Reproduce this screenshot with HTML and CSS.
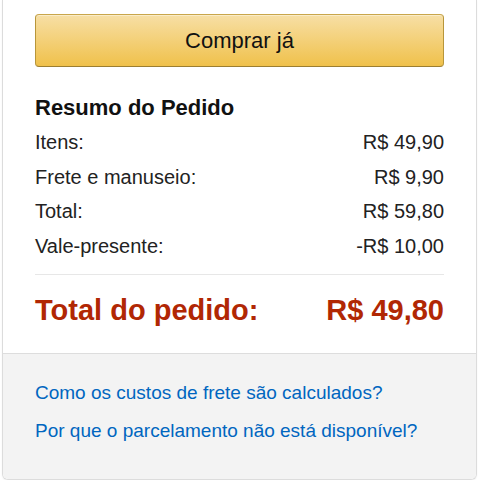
FILE: index.html
```html
<!DOCTYPE html>
<html lang="pt-BR">
<head>
<meta charset="utf-8">
<title>Resumo do Pedido</title>
<link rel="stylesheet" href="styles.css">
</head>
<body>
<div class="card">
  <div class="main">
    <button class="buy">Comprar já</button>
    <h2 class="title">Resumo do Pedido</h2>
    <div class="rows">
      <div class="row"><span>Itens:</span><span>R$ 49,90</span></div>
      <div class="row"><span>Frete e manuseio:</span><span>R$ 9,90</span></div>
      <div class="row"><span>Total:</span><span>R$ 59,80</span></div>
      <div class="row"><span>Vale-presente:</span><span>-R$ 10,00</span></div>
    </div>
    <div class="total"><span>Total do pedido:</span><span>R$ 49,80</span></div>
  </div>
  <div class="help">
    <a href="#" class="link">Como os custos de frete são calculados?</a>
    <a href="#" class="link">Por que o parcelamento não está disponível?</a>
  </div>
</div>
</body>
</html>
```

FILE: styles.css
```css
html, body {
  margin: 0;
  padding: 0;
  background: #fff;
}
body {
  font-family: "Liberation Sans", Arial, sans-serif;
  color: #111;
}
.card {
  margin-left: 2px;
  width: 475px;
  box-sizing: border-box;
  border: 1px solid #dcdcdc;
  border-top: none;
  border-radius: 0 0 6px 6px;
  box-shadow: 0 1px 2px rgba(0, 0, 0, 0.06);
  overflow: hidden;
}
.main {
  padding: 14px 32px 23px 32px;
  background: #fff;
}
.buy {
  display: block;
  width: 100%;
  height: 53px;
  margin: 0;
  padding: 0;
  border: 1px solid;
  border-color: #c9a64b #b8963a #9c7e31;
  border-radius: 4px;
  background: linear-gradient(to bottom, #f7dfa5, #f0c14b);
  box-shadow: 0 1px 0 rgba(255, 255, 255, 0.4) inset;
  font-family: "Liberation Sans", Arial, sans-serif;
  font-size: 22px;
  color: #111;
  cursor: pointer;
}
.title {
  margin: 27px 0 3px 0;
  font-size: 22px;
  line-height: 28px;
  font-weight: bold;
  color: #111;
}
.rows {
  padding-bottom: 11px;
  border-bottom: 1px solid #e7e7e7;
}
.row {
  display: flex;
  justify-content: space-between;
  font-size: 20px;
  line-height: 34.5px;
  color: #222;
}
.total {
  display: flex;
  justify-content: space-between;
  margin-top: 15px;
  font-size: 29px;
  line-height: 40px;
  font-weight: bold;
  color: #b12704;
}
.help {
  display: flex;
  flex-direction: column;
  align-items: flex-start;
  padding: 20px 32px 29px 32px;
  background: #f3f3f3;
  border-top: 1px solid #dddddd;
}
.link {
  font-size: 19px;
  line-height: 38px;
  color: #0066c0;
  text-decoration: none;
}
```
